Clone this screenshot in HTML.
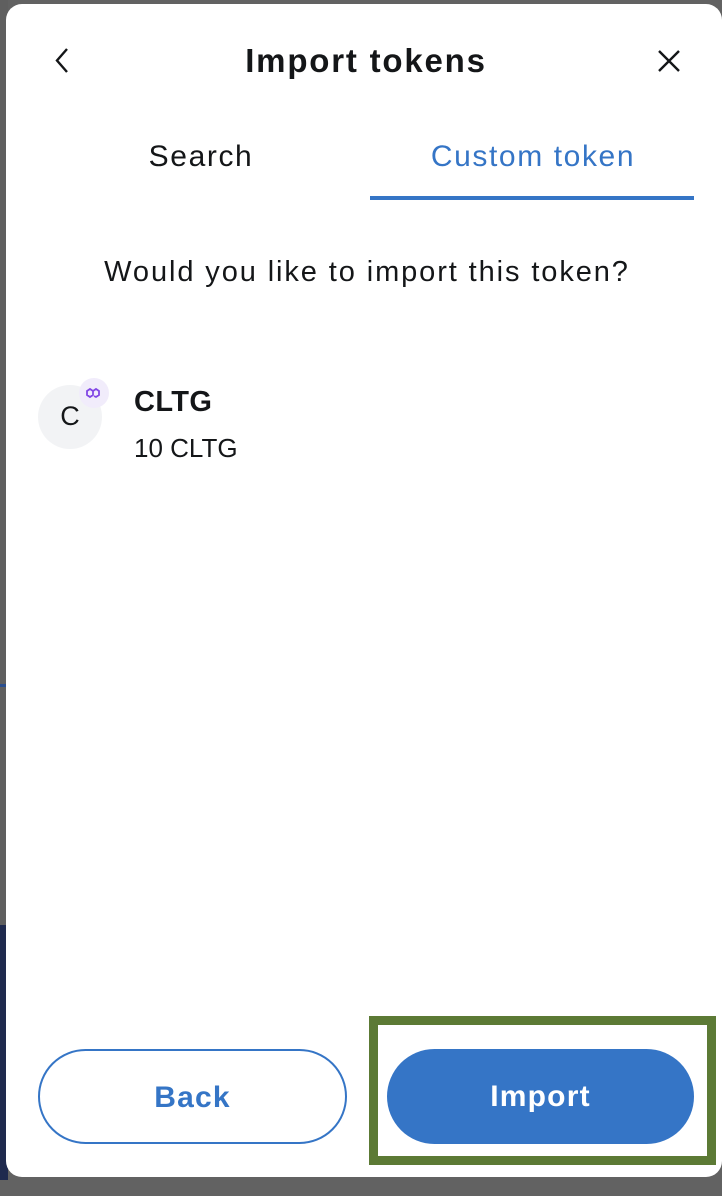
<!DOCTYPE html>
<html><head><style>
html,body{margin:0;padding:0;width:722px;height:1196px;overflow:hidden;background:#626262;font-family:"Liberation Sans",sans-serif;}
.strip{position:absolute;left:0;top:0;width:8px;height:1180px;background:#5f5f5f;}
.navy{position:absolute;left:0;top:925px;width:8px;height:255px;background:#1f2a4e;}
.blue{position:absolute;left:0;top:684px;width:8px;height:3px;background:#2b4f8f;}
.modal{position:absolute;left:6px;top:4px;width:716px;height:1173px;background:#fff;border-radius:16px;}
.abs{position:absolute;}
.title{left:0;width:732px;top:42px;text-align:center;font-size:33px;font-weight:bold;color:#141618;letter-spacing:1.8px;}
.tab{top:140px;font-size:30px;text-align:center;letter-spacing:1.6px;}
.q{top:256px;left:0;width:734px;text-align:center;font-size:29px;color:#141618;letter-spacing:1.9px;}
.btn{top:1049px;height:95px;border-radius:48px;box-sizing:border-box;text-align:center;line-height:95px;font-size:30px;font-weight:bold;letter-spacing:1.2px;}
</style></head><body>
<div class="strip"></div><div class="blue"></div><div class="navy"></div>
<div class="modal"></div>
<svg class="abs" style="left:50px;top:46px" width="24" height="30" viewBox="0 0 24 30"><path d="M17 3 L7 14.5 L17 26" fill="none" stroke="#141618" stroke-width="2.4"/></svg>
<div class="abs title">Import tokens</div>
<svg class="abs" style="left:656px;top:48px" width="26" height="26" viewBox="0 0 26 26"><path d="M3 3L23 23M23 3L3 23" stroke="#141618" stroke-width="2.4"/></svg>
<div class="abs tab" style="left:100px;width:202px;color:#141618">Search</div>
<div class="abs tab" style="left:370px;width:326px;color:#3575c6">Custom token</div>
<div class="abs" style="left:370px;top:196px;width:324px;height:4px;background:#3575c6"></div>
<div class="abs q">Would you like to import this token?</div>
<div class="abs" style="left:38px;top:385px;width:64px;height:64px;border-radius:50%;background:#f2f3f5;"></div>
<div class="abs" style="left:38px;top:401px;width:64px;text-align:center;font-size:27px;color:#141618">C</div>
<div class="abs" style="left:79px;top:378px;width:30px;height:30px;border-radius:50%;background:#f1ecfb"></div>
<svg class="abs" style="left:84px;top:385px" width="20" height="16" viewBox="0 0 20 16"><path d="M9 6 L6 4 L3 6 V10 L6 12 L9 10 V6 L12 4 L15 6 V10 L12 12 L10 11" fill="none" stroke="#8247e5" stroke-width="1.8"/></svg>
<div class="abs" style="left:134px;top:386px;font-size:29px;font-weight:bold;color:#141618;letter-spacing:0.4px">CLTG</div>
<div class="abs" style="left:134px;top:433px;font-size:26px;color:#141618">10 CLTG</div>
<div class="abs" style="left:369px;top:1016px;width:347px;height:149px;box-sizing:border-box;border:9px solid #5c7a35;"></div>
<div class="abs btn" style="left:38px;width:309px;border:2px solid #3575c6;color:#3575c6;line-height:93px">Back</div>
<div class="abs btn" style="left:387px;width:307px;background:#3575c6;color:#fff">Import</div>
</body></html>
